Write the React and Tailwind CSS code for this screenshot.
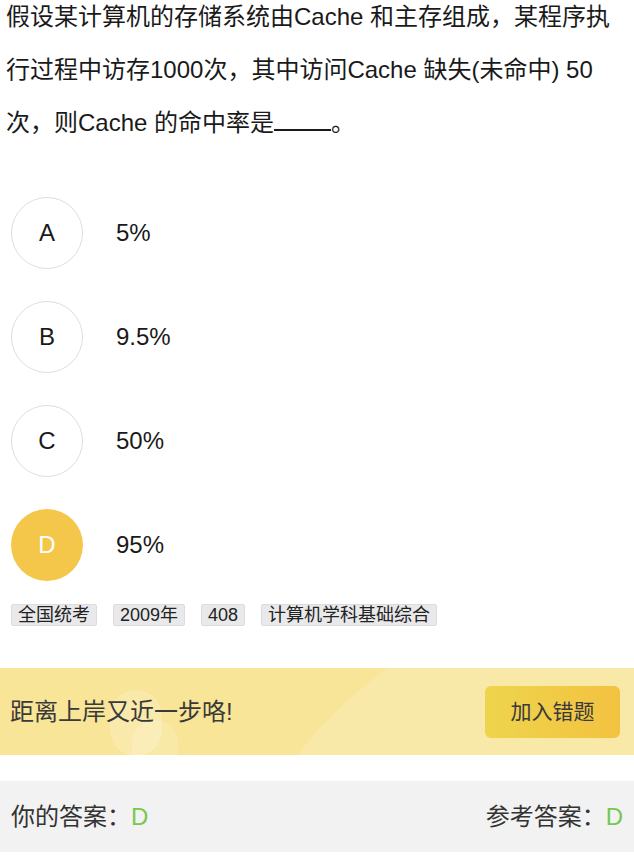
import React from "react";

const font = { fontFamily: '"Liberation Sans", "Noto Sans CJK SC", sans-serif' };

function Option({ letter, text, active }) {
  return (
    <div className="flex items-center h-[72px]">
      <div
        className={
          active
            ? "w-[72px] h-[72px] rounded-full bg-[#f4c74a] text-white flex items-center justify-center text-[24px]"
            : "w-[72px] h-[72px] rounded-full border border-[#dedede] text-[#1a1a1a] flex items-center justify-center text-[24px]"
        }
      >
        {letter}
      </div>
      <div className="ml-[33px] text-[24px] text-[#1a1a1a]">{text}</div>
    </div>
  );
}

function Tag({ children }) {
  return (
    <span className="inline-flex items-center h-[22px] px-[6px] bg-[#e9e9eb] border border-[#dcdcdc] rounded-[2px] text-[18px] leading-none text-[#222]">
      {children}
    </span>
  );
}

export default function App() {
  return (
    <div className="w-[634px] h-[858px] bg-white overflow-hidden" style={font}>
      <div className="px-[6px] mt-[-10px] text-[24px] leading-[53px] text-[#1a1a1a]">
        <div>假设某计算机的存储系统由Cache 和主存组成，某程序执</div>
        <div>行过程中访存1000次，其中访问Cache 缺失(未命中) 50</div>
        <div>
          次，则Cache 的命中率是
          <span className="inline-block w-[57px] border-b-2 border-[#1a1a1a] h-[22px] align-baseline"></span>。
        </div>
      </div>

      <div className="mt-[48px] pl-[11px] flex flex-col gap-[32px]">
        <Option letter="A" text="5%" />
        <Option letter="B" text="9.5%" />
        <Option letter="C" text="50%" />
        <Option letter="D" text="95%" active />
      </div>

      <div className="mt-[23px] pl-[11px] flex gap-[16px]">
        <Tag>全国统考</Tag>
        <Tag>2009年</Tag>
        <Tag>408</Tag>
        <Tag>计算机学科基础综合</Tag>
      </div>

      <div className="relative mt-[42px] h-[87px] bg-[#f8e597] overflow-hidden flex items-center justify-between pl-[10px] pr-[14px]">
        <div className="absolute left-[215px] top-[-73px] w-[810px] h-[810px] rounded-full bg-[#f9e9a8]"></div>
        <div className="absolute left-[110px] top-[22px] w-[52px] h-[66px] rounded-full bg-white opacity-20"></div>
        <div className="absolute left-[132px] top-[52px] w-[46px] h-[56px] rounded-full bg-white opacity-15"></div>
        <div className="relative text-[24px] text-[#3a3a3a]">距离上岸又近一步咯!</div>
        <div className="relative w-[135px] h-[52px] rounded-[6px] bg-gradient-to-r from-[#eed44c] to-[#f3c241] flex items-center justify-center text-[21px] text-[#3a3a3a]">
          加入错题
        </div>
      </div>

      <div className="mt-[26px] h-[71px] bg-[#f2f2f2] flex items-center justify-between px-[11px] text-[24px] text-[#333]">
        <div>
          你的答案：<span className="text-[#78c850]">D</span>
        </div>
        <div>
          参考答案：<span className="text-[#78c850]">D</span>
        </div>
      </div>
    </div>
  );
}
